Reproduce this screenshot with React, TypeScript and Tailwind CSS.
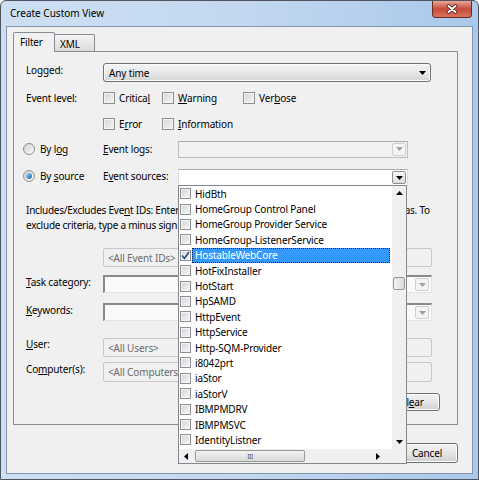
import React from "react";

const sources = [
  "HidBth",
  "HomeGroup Control Panel",
  "HomeGroup Provider Service",
  "HomeGroup-ListenerService",
  "HostableWebCore",
  "HotFixInstaller",
  "HotStart",
  "HpSAMD",
  "HttpEvent",
  "HttpService",
  "Http-SQM-Provider",
  "i8042prt",
  "iaStor",
  "iaStorV",
  "IBMPMDRV",
  "IBMPMSVC",
  "IdentityListner",
];

function Tri({ dir = "down", color = "#000" }: { dir?: "down" | "up" | "left" | "right"; color?: string }) {
  const d = {
    down: "M0 0h7L3.5 4z",
    up: "M0 4h7L3.5 0z",
    left: "M4 0v7L0 3.5z",
    right: "M0 0v7L4 3.5z",
  }[dir];
  const vertical = dir === "down" || dir === "up";
  return (
    <svg width={vertical ? 7 : 4} height={vertical ? 4 : 7} viewBox={vertical ? "0 0 7 4" : "0 0 4 7"}>
      <path d={d} fill={color} />
    </svg>
  );
}

function Box({ checked = false, size = "md" }: { checked?: boolean; size?: "md" | "sm" }) {
  return (
    <span
      className={`relative flex shrink-0 items-center justify-center border border-[#8e8f8f] bg-gradient-to-br from-[#d2d4d8] to-[#f7f7f7] shadow-[inset_0_0_0_1px_#f4f4f4] ${
        size === "md" ? "size-[12px]" : "size-[11px]"
      }`}
    >
      {checked && (
        <svg width="9" height="9" viewBox="0 0 9 9" className="absolute">
          <path d="M1 4.6L3.4 7.4L8 1" fill="none" stroke="#2a4a8c" strokeWidth="1.6" />
        </svg>
      )}
    </span>
  );
}

function Radio({ on = false }: { on?: boolean }) {
  return (
    <span className="flex size-[12px] shrink-0 items-center justify-center rounded-full border border-[#8e8f8f] bg-gradient-to-br from-[#cfd1d4] to-[#fafafa]">
      {on && <span className="size-[6px] rounded-full bg-gradient-to-br from-[#a3dbff] to-[#1b5aa3]" />}
    </span>
  );
}

function CheckItem({ label, w }: { label: React.ReactNode; w: string }) {
  return (
    <div className={`flex items-center gap-[4px] ${w}`}>
      <Box />
      <span>{label}</span>
    </div>
  );
}

function Label({ children }: { children: React.ReactNode }) {
  return <span className="w-[77px] shrink-0 pt-[1px]">{children}</span>;
}

function ComboArrowBox({ dark = false }: { dark?: boolean }) {
  return (
    <span
      className={`flex h-[13px] w-[14px] items-center justify-center rounded-[2px] border ${
        dark ? "border-[#8d8d8d] bg-gradient-to-b from-[#f6f6f6] to-[#dcdcdc]" : "border-[#cfcfcf] bg-[#f4f4f4]"
      }`}
    >
      <Tri color={dark ? "#000" : "#a0a0a0"} />
    </span>
  );
}

function WinButton({ children, w }: { children: React.ReactNode; w: string }) {
  return (
    <div
      className={`flex h-full ${w} items-center justify-center rounded-[3px] border border-[#707070] bg-gradient-to-b from-[#f2f2f2] via-[#e6e6e6] to-[#cfcfcf] shadow-[inset_0_0_0_1px_#fcfcfc]`}
    >
      {children}
    </div>
  );
}

function SunkenCombo() {
  return (
    <div className="flex h-full w-[329px] items-center justify-end border-t-2 border-l-2 border-[#8a8a8a] border-r border-b border-r-[#e4e4e4] border-b-[#e4e4e4] bg-[#fafafa] pr-[2px]">
      <ComboArrowBox />
    </div>
  );
}

function GreyField({ text }: { text: string }) {
  return (
    <div className="flex h-full w-[329px] items-center rounded-[2px] border border-[#c8c8c8] bg-[#f0f0f0] pl-[4px] text-[#6d6d6d]">
      {text}
    </div>
  );
}

function SourceList() {
  return (
    <div className="absolute left-[178px] top-[185px] z-20 flex h-[279px] w-[229px] flex-col border border-[#828790] bg-white">
      <div className="flex min-h-0 flex-1">
        <div className="flex-1">
          {sources.map((name, i) => (
            <div key={name} className="flex h-[15.4px] items-center">
              <span className="ml-[1px]">
                <Box size="sm" checked={i === 4} />
              </span>
              {i === 4 ? (
                <span className="ml-[1px] mr-[2px] flex h-full flex-1 items-center border border-dotted border-[#222] bg-[#3399ff] pl-[2px] text-white">
                  {name}
                </span>
              ) : (
                <span className="ml-[4px] whitespace-nowrap">{name}</span>
              )}
            </div>
          ))}
        </div>
        <div className="flex w-[14px] flex-col items-center bg-[#f0f0f0]">
          <div className="flex h-[14px] items-center justify-center">
            <Tri dir="up" />
          </div>
          <div className="mt-[77px] h-[13px] w-[12px] rounded-[2px] border border-[#979797] bg-gradient-to-r from-[#f3f3f3] to-[#d9d9d9]" />
          <div className="flex-1" />
          <div className="flex h-[14px] items-center justify-center">
            <Tri dir="down" />
          </div>
        </div>
      </div>
      <div className="flex h-[14px] shrink-0 items-center bg-[#f0f0f0]">
        <div className="flex w-[14px] items-center justify-center">
          <Tri dir="left" />
        </div>
        <div className="ml-[2px] flex h-[12px] w-[110px] items-center justify-center rounded-[2px] border border-[#979797] bg-gradient-to-b from-[#f3f3f3] to-[#d9d9d9] text-[7px] leading-none tracking-[-0.5px] text-[#555]">
          III
        </div>
        <div className="flex-1" />
        <div className="flex w-[14px] items-center justify-center">
          <Tri dir="right" />
        </div>
        <div className="w-[21px] self-stretch bg-[#f0f0f0]" />
      </div>
    </div>
  );
}

export default function App() {
  return (
    <div className="relative h-[480px] w-[479px] overflow-hidden bg-white font-['Noto_Sans','Liberation_Sans',sans-serif] text-[10px] leading-[12px] tracking-[-0.15px] text-black">
      <div className="flex h-full flex-col rounded-t-[6px] border border-[#4e5560] bg-gradient-to-r from-[#cddff2] via-[#c3d8f0] to-[#aac8eb] px-[5px] pb-[5px]">
        {/* title bar */}
        <div className="flex h-[25px] shrink-0 items-start justify-between">
          <span className="mt-[6px] pl-[4px] tracking-normal">Create Custom View</span>
          <div className="mr-px flex h-[17px] w-[40px] items-center justify-center rounded-b-[4px] border border-t-0 border-[#6d2a22] bg-gradient-to-b from-[#e8a598] via-[#c64a39] to-[#d9735c]">
            <svg width="12" height="10" viewBox="0 0 12 10">
              <path d="M2.5 2L9.5 8M9.5 2L2.5 8" stroke="#4a1a14" strokeWidth="3.6" strokeLinecap="round" />
              <path d="M2.5 2L9.5 8M9.5 2L2.5 8" stroke="#fff" strokeWidth="2" strokeLinecap="round" />
            </svg>
          </div>
        </div>

        {/* client area */}
        <div className="flex flex-1 flex-col border border-[#8195ad] bg-[#f0f0f0]">
          <div className="ml-[6px] mt-[5px] w-[445px]">
            <div className="relative z-10 -mb-px flex h-[20px] items-end">
              <div className="h-[20px] w-[42px] rounded-t-[2px] border border-b-0 border-[#898c95] bg-[#f0f0f0] pl-[6px] pt-[3px]">
                Filter
              </div>
              <div className="mb-px h-[17px] w-[40px] rounded-tr-[2px] border border-b-0 border-l-0 border-[#898c95] bg-gradient-to-b from-[#f3f3f3] to-[#dcdcdc] pl-[5px] pt-[3px]">
                XML
              </div>
            </div>

            {/* tab page */}
            <div className="flex h-[374px] flex-col border border-[#898c95] bg-[#f0f0f0] pl-[12px]">
              <div className="mt-[11px] flex h-[19px] items-start">
                <Label>
                  Lo<u>g</u>ged:
                </Label>
                <div className="flex h-full w-[328px] items-center justify-between rounded-[3px] border border-[#707070] bg-gradient-to-b from-[#f4f4f4] via-[#e8e8e8] to-[#d6d6d6] pl-[5px] pr-[4px] shadow-[inset_0_0_0_1px_#fbfbfb]">
                  <span>Any time</span>
                  <Tri />
                </div>
              </div>

              <div className="mt-[6px] flex h-[20px] items-center">
                <span className="w-[77px] shrink-0">Event level:</span>
                <CheckItem w="w-[59px]" label={<>Critica<u>l</u></>} />
                <CheckItem w="w-[81px]" label={<><u>W</u>arning</>} />
                <CheckItem w="" label={<>Ver<u>b</u>ose</>} />
              </div>

              <div className="mt-[6px] flex h-[20px] items-center">
                <span className="w-[77px] shrink-0" />
                <CheckItem w="w-[59px]" label={<>E<u>r</u>ror</>} />
                <CheckItem w="" label={<><u>I</u>nformation</>} />
              </div>

              <div className="-ml-[3px] mt-[5px] flex h-[20px] items-center">
                <div className="flex w-[80px] items-center gap-[5px]">
                  <Radio />
                  <span>
                    By l<u>o</u>g
                  </span>
                </div>
                <span className="w-[75px]">
                  <u>E</u>vent logs:
                </span>
                <div className="flex h-[17px] w-[230px] items-center justify-end border border-[#b9bdc3] border-t-[#a8abb0] bg-[#f2f2f2] pr-[1px]">
                  <ComboArrowBox />
                </div>
              </div>

              <div className="-ml-[3px] mt-[7px] flex h-[20px] items-center">
                <div className="flex w-[80px] items-center gap-[5px]">
                  <Radio on />
                  <span>
                    By <u>s</u>ource
                  </span>
                </div>
                <span className="w-[75px]">
                  E<u>v</u>ent sources:
                </span>
                <div className="flex h-[17px] w-[230px] items-center justify-end self-end border border-[#d9dde3] border-t-[#abadb3] bg-white pr-[1px]">
                  <ComboArrowBox dark />
                </div>
              </div>

              <p className="mt-[17px] whitespace-nowrap leading-[15px] tracking-[-0.24px]">
                Includes/Excludes Eve<u>n</u>t IDs: Enter ID numbers and/or ID ranges separated by commas. To
                <br />
                exclude criteria, type a minus sign first. For example 1,3,5-99,-76
              </p>

              <div className="mt-[15px] flex h-[19px]">
                <span className="w-[77px] shrink-0" />
                <GreyField text="<All Event IDs>" />
              </div>

              <div className="mt-[8px] flex h-[18px] items-start">
                <Label>
                  <u>T</u>ask category:
                </Label>
                <SunkenCombo />
              </div>

              <div className="mt-[10px] flex h-[18px] items-start">
                <Label>
                  <u>K</u>eywords:
                </Label>
                <SunkenCombo />
              </div>

              <div className="mt-[17px] flex h-[19px] items-start">
                <span className="w-[77px] shrink-0">
                  <u>U</u>ser:
                </span>
                <GreyField text="<All Users>" />
              </div>

              <div className="mt-[5px] flex h-[20px] items-start">
                <Label>
                  Co<u>m</u>puter(s):
                </Label>
                <GreyField text="<All Computers>" />
              </div>

              <div className="mr-[17px] mt-[11px] flex h-[18px] justify-end">
                <WinButton w="w-[56px]">
                  Cl<u>e</u>ar
                </WinButton>
              </div>
            </div>
          </div>

          <div className="mr-[14px] mt-[18px] flex h-[20px] justify-end gap-[6px]">
            <WinButton w="w-[62px]">OK</WinButton>
            <WinButton w="w-[62px]">Cancel</WinButton>
          </div>
        </div>
      </div>
      <SourceList />
    </div>
  );
}
